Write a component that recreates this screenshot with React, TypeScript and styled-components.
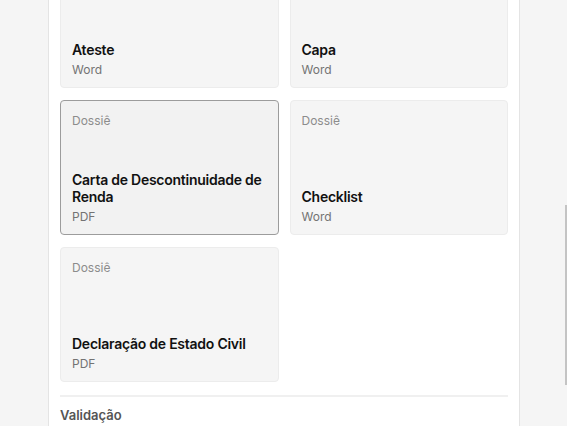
import React from "react";
import styled, { createGlobalStyle } from "styled-components";

const Global = createGlobalStyle`
  html, body { margin: 0; padding: 0; height: 100%; }
  body {
    background: #f5f5f5;
    font-family: Inter, "Noto Sans", Arial, sans-serif;
    overflow: hidden;
  }
`;

const Page = styled.div`
  display: grid;
  grid-template-columns: 48px 472px 1fr;
  height: 426px;
  overflow: hidden;
`;

const Gutter = styled.div`
  background: #f5f5f5;
`;

const Panel = styled.main`
  background: #ffffff;
  border-left: 1px solid #e4e4e4;
  border-right: 1px solid #e4e4e4;
  padding: 0 11px;
  overflow: hidden;
`;

const Grid = styled.div`
  display: grid;
  grid-template-columns: 1fr 1fr;
  column-gap: 11px;
  row-gap: 12px;
  margin-top: -47px;
`;

const Card = styled.div<{ $selected?: boolean }>`
  box-sizing: border-box;
  height: 135px;
  display: flex;
  flex-direction: column;
  padding: 12px 11px 10px;
  border-radius: 4px;
  background: ${(p) => (p.$selected ? "#f2f2f2" : "#f5f5f5")};
  border: 1px solid ${(p) => (p.$selected ? "#9c9c9c" : "#ececec")};
`;

const Label = styled.div`
  font-size: 12px;
  line-height: 15px;
  color: #8c8c8c;
`;

const Body = styled.div`
  margin-top: auto;
`;

const Title = styled.div`
  font-size: 14px;
  font-weight: 600;
  line-height: 17px;
  letter-spacing: -0.25px;
  color: #111111;
`;

const Format = styled.div`
  margin-top: 4px;
  font-size: 12px;
  line-height: 15px;
  color: #737373;
`;

const Divider = styled.hr`
  margin: 13px 0 0;
  border: 0;
  border-top: 2px solid #f0f0f0;
`;

const SectionTitle = styled.h3`
  margin: 10px 0 0;
  font-size: 13px;
  font-weight: 600;
  color: #555555;
`;

const Side = styled.div`
  position: relative;
  background: #f5f5f5;
`;

const Thumb = styled.div`
  position: absolute;
  right: 0;
  top: 205px;
  width: 2px;
  height: 180px;
  background: #c4c4c4;
`;

type Doc = { label: string; title: string; format: string; selected?: boolean };

const docs: Doc[] = [
  { label: "Dossiê", title: "Ateste", format: "Word" },
  { label: "Dossiê", title: "Capa", format: "Word" },
  { label: "Dossiê", title: "Carta de Descontinuidade de Renda", format: "PDF", selected: true },
  { label: "Dossiê", title: "Checklist", format: "Word" },
  { label: "Dossiê", title: "Declaração de Estado Civil", format: "PDF" },
];

export default function App() {
  return (
    <>
      <Global />
      <Page>
        <Gutter />
        <Panel>
          <Grid>
            {docs.map((d) => (
              <Card key={d.title} $selected={d.selected}>
                <Label>{d.label}</Label>
                <Body>
                  <Title>{d.title}</Title>
                  <Format>{d.format}</Format>
                </Body>
              </Card>
            ))}
          </Grid>
          <Divider />
          <SectionTitle>Validação</SectionTitle>
        </Panel>
        <Side>
          <Thumb />
        </Side>
      </Page>
    </>
  );
}
